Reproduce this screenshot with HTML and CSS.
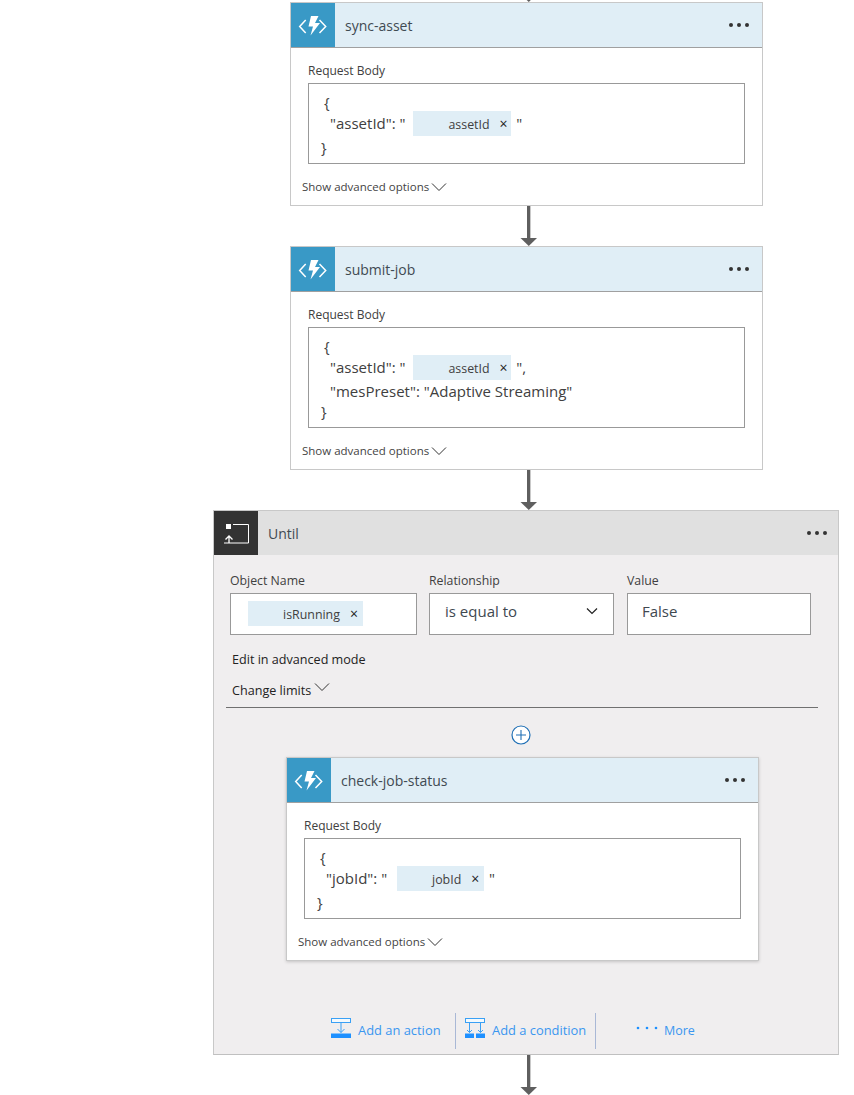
FILE: index.html
```html
<!DOCTYPE html>
<html lang="en">
<head>
<meta charset="utf-8">
<title>Logic App Designer</title>
<link rel="stylesheet" href="styles.css">
</head>
<body>
<svg width="0" height="0" class="defs">
  <symbol id="fn" viewBox="0 0 44 44">
    <path d="M14.700 17L8.700 23.500L14.700 30" fill="none" stroke="#fff" stroke-width="1.500"/>
    <path d="M28.500 17L34.700 23.500L28.500 30" fill="none" stroke="#fff" stroke-width="1.500"/>
    <path d="M20 13H27.500L24 20H29L19.500 32.500L22 23.500H17.500Z" fill="#fff"/>
  </symbol>
  <symbol id="chev" viewBox="0 0 16 10">
    <path d="M1 1.500L8 8.500L15 1.500" fill="none" stroke="#333" stroke-width="1"/>
  </symbol>
  <symbol id="arrow" viewBox="0 0 18 40">
    <rect x="7" y="0" width="3" height="33" fill="#5f5f5f"/>
    <rect x="10" y="0" width="1" height="33" fill="#c9c9c9"/>
    <path d="M0.500 32H17L8.750 40Z" fill="#5f5f5f"/>
  </symbol>
</svg>

<main class="flow">
  <div class="arrow-stub"><svg class="arrow-svg"><use href="#arrow"/></svg></div>

  <section class="card step">
    <header class="card-head">
      <span class="fn-icon"><svg class="fn-svg"><use href="#fn"/></svg></span>
      <h2 class="card-title">sync-asset</h2>
      <span class="dots"><i></i><i></i><i></i></span>
    </header>
    <div class="card-body">
      <div class="label">Request Body</div>
      <div class="code">
        <div class="ln brace-open">{</div>
        <div class="ln-chip">"assetId": " <span class="chip chip-asset">assetId<b class="x">×</b></span> "</div>
        <div class="ln brace-close">}</div>
      </div>
      <div class="advanced">Show advanced options <svg class="chev"><use href="#chev"/></svg></div>
    </div>
  </section>

  <div class="arrow"><svg class="arrow-svg"><use href="#arrow"/></svg></div>

  <section class="card step">
    <header class="card-head">
      <span class="fn-icon"><svg class="fn-svg"><use href="#fn"/></svg></span>
      <h2 class="card-title">submit-job</h2>
      <span class="dots"><i></i><i></i><i></i></span>
    </header>
    <div class="card-body card-body-tall">
      <div class="label">Request Body</div>
      <div class="code">
        <div class="ln brace-open">{</div>
        <div class="ln-chip">"assetId": " <span class="chip chip-asset">assetId<b class="x">×</b></span> ",</div>
        <div class="ln prop">"mesPreset": "Adaptive Streaming"</div>
        <div class="ln brace-close">}</div>
      </div>
      <div class="advanced">Show advanced options <svg class="chev"><use href="#chev"/></svg></div>
    </div>
  </section>

  <div class="arrow"><svg class="arrow-svg"><use href="#arrow"/></svg></div>

  <section class="until">
    <header class="until-head">
      <span class="until-icon">
        <svg width="44" height="44" viewBox="0 0 44 44">
          <rect x="12" y="13" width="5" height="5" fill="#fff"/>
          <path d="M19 13.500H34.500V32H10" fill="none" stroke="#fff" stroke-width="1"/>
          <path d="M15 32V25M11.500 28.500L15 25L18.500 28.500" fill="none" stroke="#fff" stroke-width="1.300"/>
        </svg>
      </span>
      <h2 class="card-title">Until</h2>
      <span class="dots"><i></i><i></i><i></i></span>
    </header>
    <div class="cond">
      <div class="field">
        <div class="label label-until">Object Name</div>
        <div class="input"><span class="chip chip-run">isRunning<b class="x">×</b></span></div>
      </div>
      <div class="field">
        <div class="label label-until">Relationship</div>
        <div class="input input-text select">is equal to
          <svg class="select-chev" viewBox="0 0 12 8"><path d="M1 1.500L6 6.500L11 1.500" fill="none" stroke="#222" stroke-width="1.200"/></svg>
        </div>
      </div>
      <div class="field field-value">
        <div class="label label-until">Value</div>
        <div class="input input-text">False</div>
      </div>
    </div>
    <div class="edit-adv">Edit in advanced mode</div>
    <div class="limits">Change limits <svg class="chev chev-limits"><use href="#chev"/></svg></div>
    <div class="rule"></div>
    <div class="plus-row">
      <svg width="20" height="20" viewBox="0 0 20 20">
        <circle cx="10" cy="10" r="9" fill="#fff" stroke="#1f6fb5" stroke-width="1.200"/>
        <path d="M10 5V15M5 10H15" stroke="#1f6fb5" stroke-width="1.100"/>
      </svg>
    </div>

    <section class="card nested">
      <header class="card-head">
        <span class="fn-icon"><svg class="fn-svg"><use href="#fn"/></svg></span>
        <h2 class="card-title">check-job-status</h2>
        <span class="dots"><i></i><i></i><i></i></span>
      </header>
      <div class="card-body">
        <div class="label">Request Body</div>
        <div class="code">
          <div class="ln brace-open">{</div>
          <div class="ln-chip">"jobId": " <span class="chip chip-job">jobId<b class="x">×</b></span> "</div>
          <div class="ln brace-close">}</div>
        </div>
        <div class="advanced">Show advanced options <svg class="chev"><use href="#chev"/></svg></div>
      </div>
    </section>

    <footer class="actions">
      <span class="act act-one">
        <svg class="act-icon" width="21" height="20" viewBox="0 0 21 20">
          <rect x="0.500" y="0.500" width="19" height="4" fill="#f4fafe" stroke="#3aa0f5"/>
          <path d="M10 5V14.500M6.500 11L10 14.500L13.500 11" fill="none" stroke="#3aa0f5"/>
          <rect x="0" y="15.500" width="20" height="4.500" fill="#1e90ff"/>
        </svg>
        <span class="act-label">Add an action</span>
      </span>
      <span class="sep"></span>
      <span class="act act-two">
        <svg class="act-icon" width="21" height="20" viewBox="0 0 21 20">
          <rect x="0.500" y="0.500" width="19" height="4" fill="#f4fafe" stroke="#3aa0f5"/>
          <path d="M4.500 5V14.500M2 12L4.500 14.500L7 12M15.500 5V14.500M13 12L15.500 14.500L18 12" fill="none" stroke="#3aa0f5"/>
          <rect x="0" y="15.500" width="9" height="4.500" fill="#1e90ff"/>
          <rect x="11" y="15.500" width="9" height="4.500" fill="#1e90ff"/>
        </svg>
        <span class="act-label">Add a condition</span>
      </span>
      <span class="sep"></span>
      <span class="act act-more">
        <svg width="22" height="4" viewBox="0 0 22 4" class="more-dots">
          <circle cx="2" cy="2" r="1.300" fill="#1e90ff"/>
          <circle cx="11" cy="2" r="1.300" fill="#1e90ff"/>
          <circle cx="20" cy="2" r="1.300" fill="#1e90ff"/>
        </svg>
        <span class="act-label act-label-more">More</span>
      </span>
    </footer>
  </section>

  <div class="arrow"><svg class="arrow-svg"><use href="#arrow"/></svg></div>
</main>
</body>
</html>
```

FILE: styles.css
```css
* { box-sizing: border-box; }
html, body { margin: 0; padding: 0; background: #fff; }
body {
  width: 854px;
  height: 1095px;
  overflow: hidden;
  font-family: "Open Sans", "Noto Sans", "Liberation Sans", sans-serif;
  color: #3a3a3a;
}
.defs { position: absolute; }
.flow { display: flex; flex-direction: column; align-items: flex-start; }

.arrow { width: 18px; height: 40px; margin-left: 520px; }
.arrow-stub { width: 18px; height: 2px; margin-left: 520px; overflow: hidden; display: flex; align-items: flex-end; }
.arrow-svg { display: block; width: 18px; height: 40px; flex: none; }

.card { width: 473px; background: #fff; border: 1px solid #c8c8c8; }
.step { margin-left: 290px; }
.nested { margin-left: 72px; box-shadow: 0 1px 3px rgba(0,0,0,.18); }

.card-head { display: flex; align-items: center; height: 45px; background: #e0eef6; border-bottom: 1px solid #a0a0a0; }
.fn-icon { width: 44px; height: 44px; background: #3999c6; flex: none; }
.fn-svg { display: block; width: 44px; height: 44px; }
.card-title { margin: 0 0 0 10px; flex: 1; font-size: 14px; font-weight: 400; color: #3f4a52; }
.dots { display: flex; gap: 4px; margin-right: 13px; }
.dots i { width: 4px; height: 4px; border-radius: 50%; background: #333; }

.card-body { padding: 15px 17px 0; height: 157px; }
.card-body-tall { height: 177px; }
.label { font-size: 12px; line-height: 16px; color: #404040; }
.label-until { font-size: 12.300px; }
.code { margin-top: 4px; border: 1px solid #999; padding: 7px 0; font-size: 15px; color: #404040; }
.ln { height: 20px; line-height: 20px; padding-top: 1px; }
.brace-open { padding-left: 15px; }
.brace-close { padding-left: 12px; }
.prop { padding-left: 21px; }
.ln-chip { height: 25px; line-height: 25px; padding-left: 21px; white-space: nowrap; }
.chip { display: inline-block; height: 25px; line-height: 25px; padding-left: 35px; background: #e0eef6; font-size: 12.400px; color: #404040; vertical-align: top; margin: 0 1px 0 4px; }
.chip-asset { width: 98px; }
.chip-job { width: 87px; margin-left: 6px; }
.chip-run { width: 115px; margin: 0; }
.x { font-weight: 400; font-size: 14px; color: #222; margin-left: 10px; }
.advanced { margin: 15px 0 0 -6px; font-size: 11.500px; line-height: 16px; color: #444; display: flex; align-items: center; white-space: pre; }
.advanced .chev { margin-left: -1px; }
.chev { width: 16px; height: 10px; }

.until { width: 626px; height: 545px; margin-left: 213px; background: #f0eeef; border: 1px solid #c8c8c8; border-bottom-color: #c0c0c0; }
.until-head { display: flex; align-items: center; height: 44px; background: #e0e0e0; }
.until-icon { width: 44px; height: 44px; background: #333; flex: none; }
.until-head .dots { margin-right: 11px; }

.cond { display: grid; grid-template-columns: 187px 185px 185px; column-gap: 12px; margin: 18px 0 0 16px; }
.field-value { margin-left: 1px; }
.input { height: 42px; margin-top: 4px; background: #fff; border: 1px solid #999; padding: 7px 0 0 17px; }
.input-text { padding: 0 0 6px 15px; display: flex; align-items: center; justify-content: space-between; font-size: 15px; color: #404850; line-height: 34px; }
.field-value .input-text { padding-left: 14px; }
.select-chev { width: 12px; height: 8px; margin-right: 15px; }

.edit-adv { margin: 17px 0 0 18px; font-size: 12.600px; line-height: 16px; color: #222; }
.limits { margin: 13px 0 0 18px; height: 20px; font-size: 12.600px; line-height: 20px; color: #222; display: flex; gap: 3px; }
.chev-limits { margin-top: 1px; }
.rule { height: 1px; background: #707070; margin: 6px 20px 0 12px; }
.plus-row { display: flex; height: 49px; padding: 17px 0 0 297px; }

.actions { display: flex; align-items: center; height: 36px; margin-top: 52px; font-size: 12.900px; color: #3a96f0; }
.act { display: flex; align-items: center; gap: 6px; white-space: nowrap; }
.act-icon { margin-top: -6px; }
.act-label { margin-top: -2px; }
.act-label-more { font-size: 12.500px; }
.act-one { margin-left: 117px; width: 124px; }
.act-two { margin-left: 9px; width: 130px; }
.act-more { margin-left: 40px; }
.more-dots { margin-top: -6px; }
.sep { width: 1px; height: 36px; background: #a9b8d6; }
```
